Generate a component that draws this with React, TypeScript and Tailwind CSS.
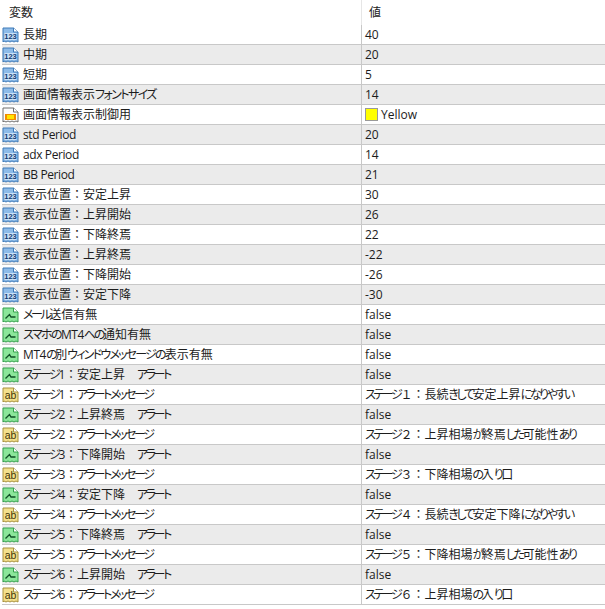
type Kind = 'num' | 'color' | 'bool' | 'text';

const ROWS: [Kind, string, string][] = [
  ['num', '長期', '40'],
  ['num', '中期', '20'],
  ['num', '短期', '5'],
  ['num', '画面情報表示フォントサイズ', '14'],
  ['color', '画面情報表示制御用', 'Yellow'],
  ['num', 'std Period', '20'],
  ['num', 'adx Period', '14'],
  ['num', 'BB Period', '21'],
  ['num', '表示位置：安定上昇', '30'],
  ['num', '表示位置：上昇開始', '26'],
  ['num', '表示位置：下降終焉', '22'],
  ['num', '表示位置：上昇終焉', '-22'],
  ['num', '表示位置：下降開始', '-26'],
  ['num', '表示位置：安定下降', '-30'],
  ['bool', 'メール送信有無', 'false'],
  ['bool', 'スマホのMT4への通知有無', 'false'],
  ['bool', 'MT4の別ウィンドウメッセージの表示有無', 'false'],
  ['bool', 'ステージ1：安定上昇　アラート', 'false'],
  ['text', 'ステージ1：アラートメッセージ', 'ステージ１：長続きして安定上昇になりやすい'],
  ['bool', 'ステージ2：上昇終焉　アラート', 'false'],
  ['text', 'ステージ2：アラートメッセージ', 'ステージ２：上昇相場が終焉した可能性あり'],
  ['bool', 'ステージ3：下降開始　アラート', 'false'],
  ['text', 'ステージ3：アラートメッセージ', 'ステージ３：下降相場の入り口'],
  ['bool', 'ステージ4：安定下降　アラート', 'false'],
  ['text', 'ステージ4：アラートメッセージ', 'ステージ４：長続きして安定下降になりやすい'],
  ['bool', 'ステージ5：下降終焉　アラート', 'false'],
  ['text', 'ステージ5：アラートメッセージ', 'ステージ５：下降相場が終焉した可能性あり'],
  ['bool', 'ステージ6：上昇開始　アラート', 'false'],
  ['text', 'ステージ6：アラートメッセージ', 'ステージ６：上昇相場の入り口'],
];

// ticket outline shared by all type icons (folded corner, serrated bottom)
const TICKET = 'M1 1H11.5L16 5V15L14 14L12 15L10 14L8 15L6 14L4 15L2 14L1 15Z';

const PALETTE = {
  num: { fill: '#8dbbe8', stroke: '#3f7ab8' },
  color: { fill: '#fbfbfb', stroke: '#6f6f6f' },
  bool: { fill: '#8be69a', stroke: '#35a04c' },
  text: { fill: '#f3e08c', stroke: '#a8903c' },
};

function TypeIcon({ kind }: { kind: Kind }) {
  const p = PALETTE[kind];
  return (
    <svg width="17" height="16" viewBox="0 0 17 16" className="shrink-0">
      <path d={TICKET} fill={p.fill} stroke={p.stroke} />
      <path d="M11.5 1V5H16" fill="#ffffff" stroke={p.stroke} />
      {kind === 'num' && (
        <g>
          <rect x="2.5" y="6" width="12" height="7" fill="#c9e0f7" />
          <text x="8.5" y="12.2" textAnchor="middle" fontSize="7.5" fontWeight="700" fontFamily="Liberation Sans, sans-serif" fill="#0f3a72">
            123
          </text>
        </g>
      )}
      {kind === 'color' && (
        <g>
          <rect x="3" y="7" width="11" height="6" fill="#f28c00" />
          <rect x="5" y="8" width="7" height="4" fill="#ffe400" />
        </g>
      )}
      {kind === 'bool' && <path d="M3.5 11.5L7.5 7.5L9 10H13.5" fill="none" stroke="#0f4f25" strokeWidth="1.3" />}
      {kind === 'text' && (
        <text x="8.5" y="12" textAnchor="middle" fontSize="10.5" fontFamily="Liberation Sans, sans-serif" fill="#3f3306">
          ab
        </text>
      )}
    </svg>
  );
}

// the screenshot's UI font has narrow kana and latin next to full-em kanji,
// so each run of the label gets its own spacing
function Label({ text }: { text: string }) {
  const runs = text.match(/[１-６]?：|[ぁ-んァ-ヶー]+|[A-Za-z0-9 ]+|[^ぁ-んァ-ヶーA-Za-z0-9 １-６：]+/g) ?? [];
  return (
    <>
      {runs.map((run, i) => {
        let cls = '';
        if (run.endsWith('：')) cls = '[font-feature-settings:normal]';
        else if (/^[ウスの]/.test(run) && run.length > 4) cls = 'tracking-[-1.8px]';
        else if (/^[ぁ-ん]/.test(run)) cls = 'tracking-[-2.4px]';
        else if (/[ーッ]/.test(run)) cls = 'tracking-[-2.4px]';
        else if (/^[ァ-ヶ]/.test(run)) cls = 'tracking-[-1.6px]';
        else if (/^[A-Za-z0-9 ]/.test(run)) cls = 'tracking-[-0.4px]';
        return (
          <span key={i} className={cls}>
            {run}
          </span>
        );
      })}
    </>
  );
}

export default function App() {
  return (
    <div className="h-[609px] w-[605px] overflow-hidden bg-white pl-[2px] text-[12px] leading-[19px] text-[#1c1c1c] [font-family:'Open_Sans','Noto_Sans_CJK_JP',sans-serif] [font-feature-settings:'palt']">
      <div className="flex h-[25px] items-center">
        <div className="w-[359px] pl-[7px]">変数</div>
        <div className="flex h-full flex-1 items-center border-l border-[#e6e6e6] pl-[7px]">値</div>
      </div>
      {ROWS.map(([kind, name, value], i) => (
        <div key={i} className={`flex h-[20px] border-b border-[#c8c8c8] ${i % 2 === 1 ? 'bg-[#ebebeb]' : 'bg-white'}`}>
          <div className="flex w-[359px] items-center gap-[4px] overflow-hidden whitespace-nowrap">
            <TypeIcon kind={kind} />
            <span>
              <Label text={name} />
            </span>
          </div>
          <div className="flex flex-1 items-center gap-[3px] overflow-hidden whitespace-nowrap border-l border-[#c8c8c8] pl-[3px]">
            {kind === 'color' && <span className="h-[13px] w-[13px] shrink-0 border border-[#999999] bg-[#ffff00]" />}
            <span>{kind === 'text' ? <Label text={value} /> : value}</span>
          </div>
        </div>
      ))}
    </div>
  );
}
